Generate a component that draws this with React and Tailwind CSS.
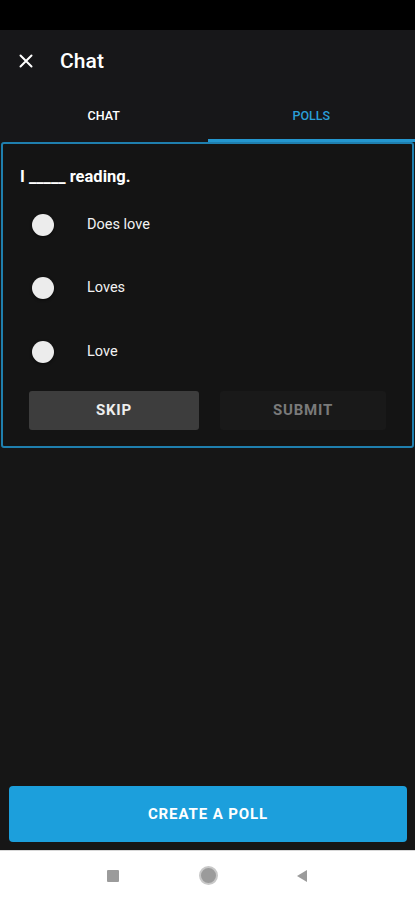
import React, { useState } from "react";

const options = ["Does love", "Loves", "Love"];

export default function App() {
  const [tab, setTab] = useState("polls");
  const [choice, setChoice] = useState(null);

  return (
    <div className="w-[415px] h-[900px] flex flex-col bg-[#161616] text-white font-['Roboto',sans-serif] overflow-hidden">
      {/* status bar */}
      <div className="h-[30px] bg-black shrink-0" />

      {/* header */}
      <div className="h-[60px] bg-[#171719] flex items-center shrink-0 pt-[2px]">
        <button className="w-[52px] h-[58px] flex items-center justify-center text-white">
          <svg width="14" height="14" viewBox="0 0 14 14">
            <path d="M1.5 1.5 L12.5 12.5 M12.5 1.5 L1.5 12.5" stroke="white" strokeWidth="2" strokeLinecap="round" />
          </svg>
        </button>
        <span className="ml-[8px] mt-[2px] text-[21px] font-medium tracking-[0.1px]">Chat</span>
      </div>

      {/* tabs */}
      <div className="h-[52px] bg-[#171719] flex shrink-0">
        <button
          onClick={() => setTab("chat")}
          className="flex-1 flex items-center justify-center text-[12.5px] font-medium text-white pt-[1px]"
        >
          CHAT
        </button>
        <button
          onClick={() => setTab("polls")}
          className="flex-1 relative flex items-center justify-center text-[12.5px] font-medium text-[#2a9fd8] pt-[1px]"
        >
          POLLS
          <span className="absolute left-0 right-0 bottom-0 h-[3px] bg-[#2497cf]" />
        </button>
      </div>

      {/* content */}
      <div className="flex-1 bg-[#161616]">
        <div className="mx-[1px] h-[306px] border-2 border-[#1f7fae] rounded-[3px] bg-[#141414] flex flex-col">
          <p className="pl-[17px] pt-[23px] text-[16.5px] font-bold leading-[20px]">I _____ reading.</p>
          <div className="flex flex-col mt-[6px]">
            {options.map((o, i) => (
              <label key={o} onClick={() => setChoice(i)} className="h-[63.5px] flex items-center cursor-pointer">
                <span className="ml-[29px] w-[22px] h-[22px] rounded-full bg-[#ececec] shadow-[0_1px_3px_rgba(0,0,0,0.6)] flex items-center justify-center">
                  {choice === i && <span className="w-[10px] h-[10px] rounded-full bg-[#2497cf]" />}
                </span>
                <span className="ml-[33px] text-[14.5px] text-[#f2f2f2]">{o}</span>
              </label>
            ))}
          </div>
          <div className="flex px-[26px] gap-[21px] mt-[7px]">
            <button className="w-[171px] h-[39px] rounded-[3px] bg-[#3d3d3d] text-[15px] font-bold tracking-[0.8px] text-[#eeeeee]">
              SKIP
            </button>
            <button className="w-[167px] h-[39px] rounded-[3px] bg-[#191919] text-[15px] font-bold tracking-[0.8px] text-[#7a7a7a]">
              SUBMIT
            </button>
          </div>
        </div>
      </div>

      {/* create poll */}
      <div className="px-[9px] pb-[8px] pt-[8px] bg-[#161616] shrink-0">
        <button className="w-[398px] h-[56px] rounded-[4px] bg-[#1c9fdc] text-[15px] font-bold tracking-[0.9px] text-white">
          CREATE A POLL
        </button>
      </div>

      {/* nav bar */}
      <div className="h-[50px] bg-white border-t border-[#d8d8d8] flex items-center shrink-0 pl-[107px]">
        <span className="w-[12px] h-[12px] bg-[#9b9b9b] rounded-[1px]" />
        <span className="ml-[80px] w-[19px] h-[19px] rounded-full bg-[#9b9b9b] border-[2px] border-[#c8c8c8]" />
        <svg className="ml-[78px]" width="12" height="14" viewBox="0 0 12 14">
          <path d="M11 1 L1 7 L11 13 Z" fill="#9b9b9b" />
        </svg>
      </div>
    </div>
  );
}
